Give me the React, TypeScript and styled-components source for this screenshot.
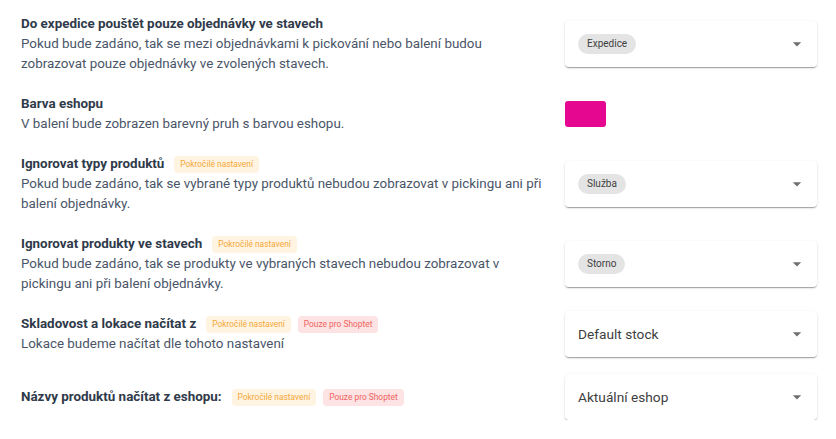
import React from "react";
import styled, { createGlobalStyle } from "styled-components";

type TBadgeProps = {
  $tone: "advanced" | "shoptet";
};

type TControlProps = {
  $bleed?: boolean;
};

type TSwatchProps = {
  $color: string;
};

const GlobalStyle = createGlobalStyle`
  body {
    margin: 0;
    background: #ffffff;
    font-family: Roboto, "Noto Sans", "Liberation Sans", sans-serif;
  }
`;

const PageContainer = styled.div`
  display: flex;
  flex-direction: column;
  gap: 20px;
  padding: 14px 19px 0 21px;
`;

const SettingRow = styled.div`
  display: flex;
  flex-direction: row;
  align-items: center;
  gap: 18px;
`;

const TextContainer = styled.div`
  flex: 0 0 526px;
  font-size: 13.4px;
  line-height: 20px;
`;

const SettingTitle = styled.div`
  display: flex;
  flex-direction: row;
  align-items: center;
  font-weight: 700;
  color: #2f3a4a;
`;

const SettingDescription = styled.div`
  color: #4a5568;
`;

const BadgeContainer = styled.div`
  display: flex;
  flex-direction: row;
  gap: 7px;
  margin-left: 10px;
`;

const Badge = styled.span<TBadgeProps>`
  font-size: 8.4px;
  font-weight: 400;
  line-height: 17px;
  padding: 0 6px;
  border-radius: 4px;
  color: ${(props) => (props.$tone === "advanced" ? "#f5a93a" : "#ef6461")};
  background-color: ${(props) =>
    props.$tone === "advanced" ? "#fff3e1" : "#fde3e3"};
`;

const ControlContainer = styled.div<TControlProps>`
  flex: 0 0 252px;
  margin: ${(props) => (props.$bleed ? "-3px 0" : "0")};
`;

const SelectBox = styled.div`
  height: 46px;
  display: flex;
  flex-direction: row;
  align-items: center;
  justify-content: space-between;
  padding: 0 10px 0 13px;
  background: #ffffff;
  border-radius: 4px;
  box-shadow: 0px 2px 1px -1px rgba(0, 0, 0, 0.2),
    0px 1px 1px 0px rgba(0, 0, 0, 0.14), 0px 1px 3px 0px rgba(0, 0, 0, 0.12);
`;

const Chip = styled.span`
  font-size: 10px;
  line-height: 20px;
  padding: 0 9px;
  border-radius: 10px;
  background: #e4e4e4;
  color: #404040;
`;

const SelectValue = styled.span`
  font-size: 13.7px;
  color: #404040;
`;

const ColorSwatch = styled.div<TSwatchProps>`
  width: 41px;
  height: 26px;
  border-radius: 3px;
  background-color: ${(props) => props.$color};
`;

const ArrowDropDown = () => (
  <svg width="20" height="20" viewBox="0 0 24 24" fill="#6f6f6f">
    <path d="M7 10l5 5 5-5z" />
  </svg>
);

const Select = ({ value, chip }: { value: string; chip?: boolean }) => (
  <SelectBox>
    {chip ? <Chip>{value}</Chip> : <SelectValue>{value}</SelectValue>}
    <ArrowDropDown />
  </SelectBox>
);

const Badges = ({ shoptet }: { shoptet?: boolean }) => (
  <BadgeContainer>
    <Badge $tone="advanced">Pokročilé nastavení</Badge>
    {shoptet && <Badge $tone="shoptet">Pouze pro Shoptet</Badge>}
  </BadgeContainer>
);

const App = () => {
  return (
    <>
      <GlobalStyle />
      <PageContainer>
        <SettingRow>
          <TextContainer>
            <SettingTitle>Do expedice pouštět pouze objednávky ve stavech</SettingTitle>
            <SettingDescription>
              Pokud bude zadáno, tak se mezi objednávkami k pickování nebo balení
              budou zobrazovat pouze objednávky ve zvolených stavech.
            </SettingDescription>
          </TextContainer>
          <ControlContainer>
            <Select value="Expedice" chip />
          </ControlContainer>
        </SettingRow>

        <SettingRow>
          <TextContainer>
            <SettingTitle>Barva eshopu</SettingTitle>
            <SettingDescription>
              V balení bude zobrazen barevný pruh s barvou eshopu.
            </SettingDescription>
          </TextContainer>
          <ControlContainer>
            <ColorSwatch $color="#e5078f" />
          </ControlContainer>
        </SettingRow>

        <SettingRow>
          <TextContainer>
            <SettingTitle>
              Ignorovat typy produktů
              <Badges />
            </SettingTitle>
            <SettingDescription>
              Pokud bude zadáno, tak se vybrané typy produktů nebudou zobrazovat v
              pickingu ani při balení objednávky.
            </SettingDescription>
          </TextContainer>
          <ControlContainer>
            <Select value="Služba" chip />
          </ControlContainer>
        </SettingRow>

        <SettingRow>
          <TextContainer>
            <SettingTitle>
              Ignorovat produkty ve stavech
              <Badges />
            </SettingTitle>
            <SettingDescription>
              Pokud bude zadáno, tak se produkty ve vybraných stavech nebudou
              zobrazovat v pickingu ani při balení objednávky.
            </SettingDescription>
          </TextContainer>
          <ControlContainer>
            <Select value="Storno" chip />
          </ControlContainer>
        </SettingRow>

        <SettingRow>
          <TextContainer>
            <SettingTitle>
              Skladovost a lokace načítat z
              <Badges shoptet />
            </SettingTitle>
            <SettingDescription>
              Lokace budeme načítat dle tohoto nastavení
            </SettingDescription>
          </TextContainer>
          <ControlContainer $bleed>
            <Select value="Default stock" />
          </ControlContainer>
        </SettingRow>

        <SettingRow>
          <TextContainer>
            <SettingTitle>
              Názvy produktů načítat z eshopu:
              <Badges shoptet />
            </SettingTitle>
          </TextContainer>
          <ControlContainer>
            <Select value="Aktuální eshop" />
          </ControlContainer>
        </SettingRow>
      </PageContainer>
    </>
  );
};

export default App;
